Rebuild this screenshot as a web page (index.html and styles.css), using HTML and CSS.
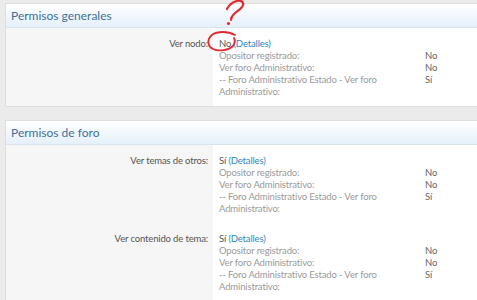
FILE: index.html
```html
<!DOCTYPE html>
<html lang="es">
<head>
    <meta charset="UTF-8">
    <meta name="viewport" content="width=device-width, initial-scale=1.0">
    <title>Permisos</title>
    <link rel="stylesheet" href="styles.css">
</head>
<body>
    <div class="page">
        <div class="block">
            <div class="block-header">Permisos generales</div>
            <div class="block-body">
                <div class="perm-row">
                    <div class="perm-label">Ver nodo:</div>
                    <div class="perm-value">
                        <div class="perm-main">No <a href="#">(Detalles)</a></div>
                        <div class="perm-detail">
                            <span>Opositor registrado:</span><span>No</span>
                            <span>Ver foro Administrativo:</span><span>No</span>
                            <span>-- Foro Administrativo Estado - Ver foro Administrativo:</span><span>Sí</span>
                        </div>
                    </div>
                </div>
            </div>
        </div>

        <div class="block">
            <div class="block-header">Permisos de foro</div>
            <div class="block-body">
                <div class="perm-row">
                    <div class="perm-label">Ver temas de otros:</div>
                    <div class="perm-value">
                        <div class="perm-main">Sí <a href="#">(Detalles)</a></div>
                        <div class="perm-detail">
                            <span>Opositor registrado:</span><span>No</span>
                            <span>Ver foro Administrativo:</span><span>No</span>
                            <span>-- Foro Administrativo Estado - Ver foro Administrativo:</span><span>Sí</span>
                        </div>
                    </div>
                </div>
                <div class="perm-row">
                    <div class="perm-label">Ver contenido de tema:</div>
                    <div class="perm-value">
                        <div class="perm-main">Sí <a href="#">(Detalles)</a></div>
                        <div class="perm-detail">
                            <span>Opositor registrado:</span><span>No</span>
                            <span>Ver foro Administrativo:</span><span>No</span>
                            <span>-- Foro Administrativo Estado - Ver foro Administrativo:</span><span>Sí</span>
                        </div>
                    </div>
                </div>
            </div>
        </div>
    </div>

    <!-- red pen scribble drawn over the screenshot -->
    <svg class="scribble" width="477" height="300" viewBox="0 0 477 300">
        <path d="M227 9 C229 5 233 2 237 1 C241 0 244 2 243 5 C242 9 237 11 234 14 C232 16 231 18 231 20" fill="none" stroke="#e02a2f" stroke-width="2.2" stroke-linecap="round"/>
        <circle cx="228.5" cy="23.5" r="1.6" fill="#e02a2f"/>
        <path d="M235 35 C228 31 217 31 212 35 C207 39 207 46 213 49 C219 52 229 50 233 46 C235 43 235 40 234 38" fill="none" stroke="#e02a2f" stroke-width="1.8" stroke-linecap="round"/>
    </svg>
</body>
</html>
```

FILE: styles.css
```css
body {
    margin: 0;
    background: #ebebeb;
    font-family: Lato, 'Liberation Sans', Arial, sans-serif;
    font-size: 9.5px;
    letter-spacing: -0.15px;
    color: #555;
    overflow: hidden;
}
.page {
    padding: 3px 0 0 5px;
}
.block {
    background: #fff;
    border: 1px solid #dedede;
    border-right: none;
    margin-bottom: 13px;
}
.block-header {
    height: 23px;
    line-height: 24px;
    padding: 0 5px;
    font-size: 12px;
    letter-spacing: 0;
    color: #41709f;
    background: linear-gradient(to bottom, #ffffff 0%, #e4f0fb 100%);
    border-bottom: 1px solid #dbe3ec;
}
.perm-row {
    display: grid;
    grid-template-columns: 207px 1fr;
    line-height: 12px;
}
.perm-label {
    background: #f6f6f6;
    text-align: right;
    padding: 10px 5px 8px 0;
    color: #555;
}
.perm-value {
    padding: 10px 0 8px 6px;
}
.perm-main {
    color: #555;
}
.perm-main a {
    color: #2f87c3;
    text-decoration: none;
}
.perm-detail {
    display: grid;
    grid-template-columns: 206px 1fr;
    color: #9a9a9a;
}
.perm-detail span:nth-child(odd) {
    padding-right: 44px;
}
.perm-detail span:nth-child(even) {
    color: #666;
}
.scribble {
    position: absolute;
    top: 0;
    left: 0;
    pointer-events: none;
}
```
